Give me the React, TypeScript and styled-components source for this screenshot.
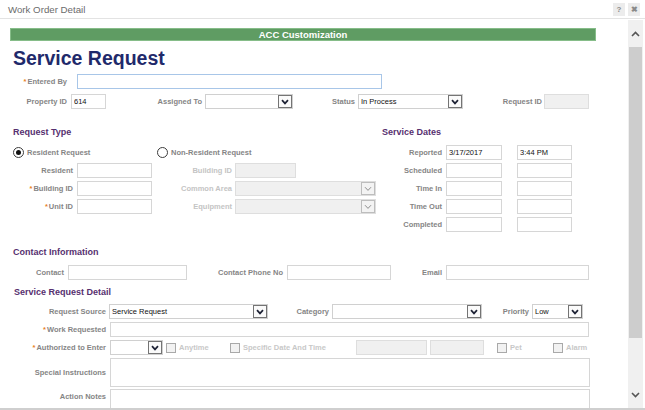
import styled, { createGlobalStyle } from "styled-components";

const GlobalStyle = createGlobalStyle`
  body {
    margin: 0;
    background: #fff;
    font-family: "Liberation Sans", Arial, sans-serif;
  }
`;

function Chevron({ disabled }: { disabled?: boolean }) {
  return (
    <svg width="8" height="6" viewBox="0 0 8 6">
      <path
        d="M1 1.2 L4 4.4 L7 1.2"
        fill="none"
        stroke={disabled ? "#8d8d8d" : "#1d2235"}
        strokeWidth={disabled ? 1 : 1.7}
      />
    </svg>
  );
}

function Req() {
  return <Star>*</Star>;
}

type SelectProps = { w: number; ml: number; value?: string; disabled?: boolean };

function Select({ w, ml, value, disabled }: SelectProps) {
  return (
    <SelectBox $w={w} $ml={ml} $disabled={disabled}>
      <span>{value}</span>
      <ArrowBtn $disabled={disabled}>
        <Chevron disabled={disabled} />
      </ArrowBtn>
    </SelectBox>
  );
}

function App() {
  return (
    <>
      <GlobalStyle />
      <Window>
        <TitleBar>
          <span>Work Order Detail</span>
          <TitleButtons>
            <TitleBtn>?</TitleBtn>
            <TitleBtn>✖</TitleBtn>
          </TitleButtons>
        </TitleBar>
        <Body>
          <Content>
            <Banner>ACC Customization</Banner>
            <PageTitle>Service Request</PageTitle>

            <Row $mt={5}>
              <Label $w={57}>
                <Req />
                Entered By
              </Label>
              <TextBox $w={305} $ml={10} $focus readOnly value="" />
            </Row>

            <Row $mt={5}>
              <Label $w={57}>Property ID</Label>
              <TextBox $w={35} $ml={4} readOnly value="614" />
              <Label $w={96}>Assigned To</Label>
              <Select w={88} ml={3} />
              <Label $w={62}>Status</Label>
              <Select w={105} ml={3} value="In Process" />
              <Label $w={79}>Request ID</Label>
              <TextBox $w={45} $ml={2} $disabled readOnly value="" />
            </Row>

            <Columns>
              <Column $w={372}>
                <Heading $pl={3}>Request Type</Heading>
                <Row $mt={7}>
                  <RadioOption $w={144} $ml={3}>
                    <Radio>
                      <Dot />
                    </Radio>
                    Resident Request
                  </RadioOption>
                  <RadioOption>
                    <Radio />
                    Non-Resident Request
                  </RadioOption>
                </Row>
                <Row $mt={3}>
                  <Label $w={63}>Resident</Label>
                  <TextBox $w={75} $ml={4} readOnly value="" />
                  <Label $w={80} $muted>
                    Building ID
                  </Label>
                  <TextBox $w={61} $ml={3} $disabled readOnly value="" />
                </Row>
                <Row $mt={3}>
                  <Label $w={63}>
                    <Req />
                    Building ID
                  </Label>
                  <TextBox $w={75} $ml={4} readOnly value="" />
                  <Label $w={80} $muted>
                    Common Area
                  </Label>
                  <Select w={141} ml={3} disabled />
                </Row>
                <Row $mt={3}>
                  <Label $w={63}>
                    <Req />
                    Unit ID
                  </Label>
                  <TextBox $w={75} $ml={4} readOnly value="" />
                  <Label $w={80} $muted>
                    Equipment
                  </Label>
                  <Select w={141} ml={3} disabled />
                </Row>
              </Column>

              <Column>
                <Heading>Service Dates</Heading>
                {[
                  ["Reported", "3/17/2017", "3:44 PM"],
                  ["Scheduled", "", ""],
                  ["Time In", "", ""],
                  ["Time Out", "", ""],
                  ["Completed", "", ""],
                ].map(([label, date, time], i) => (
                  <Row key={label} $mt={i === 0 ? 7 : 3}>
                    <Label $w={60}>{label}</Label>
                    <TextBox $w={56} $ml={4} readOnly value={date} />
                    <TextBox $w={55} $ml={15} readOnly value={time} />
                  </Row>
                ))}
              </Column>
            </Columns>

            <Heading $mt={14} $pl={3}>
              Contact Information
            </Heading>
            <Row $mt={7}>
              <Label $w={54}>Contact</Label>
              <TextBox $w={119} $ml={4} readOnly value="" />
              <Label $w={96}>Contact Phone No</Label>
              <TextBox $w={104} $ml={4} readOnly value="" />
              <Label $w={51}>Email</Label>
              <TextBox $w={143} $ml={4} readOnly value="" />
            </Row>

            <Heading $mt={6} $pl={4}>
              Service Request Detail
            </Heading>
            <Row $mt={6}>
              <Label $w={96}>Request Source</Label>
              <Select w={159} ml={3} value="Service Request" />
              <Label $w={61}>Category</Label>
              <Select w={150} ml={3} />
              <Label $w={47}>Priority</Label>
              <Select w={51} ml={3} value="Low" />
            </Row>
            <Row $mt={3}>
              <Label $w={96}>
                <Req />
                Work Requested
              </Label>
              <TextBox $w={479} $ml={4} readOnly value="" />
            </Row>
            <Row $mt={3}>
              <Label $w={96}>
                <Req />
                Authorized to Enter
              </Label>
              <Select w={53} ml={4} />
              <CheckOption $w={64} $ml={3}>
                <CheckBox />
                Anytime
              </CheckOption>
              <CheckOption $w={126}>
                <CheckBox />
                Specific Date And Time
              </CheckOption>
              <TextBox $w={71} $ml={0} $disabled readOnly value="" />
              <TextBox $w={54} $ml={3} $disabled readOnly value="" />
              <CheckOption $w={56} $ml={13}>
                <CheckBox />
                Pet
              </CheckOption>
              <CheckOption>
                <CheckBox />
                Alarm
              </CheckOption>
            </Row>
            <Row $mt={3} $h={29}>
              <Label $w={96}>Special Instructions</Label>
              <NoteBox $w={480} $h={29} />
            </Row>
            <Row $mt={2} $h={29} $top>
              <Label $w={96} $pt={3}>
                Action Notes
              </Label>
              <NoteBox $w={480} $h={29} />
            </Row>
          </Content>

          <ScrollBar>
            <ScrollBtn>
              <svg width="9" height="6" viewBox="0 0 9 6">
                <path d="M1 5 L4.5 1.5 L8 5" fill="none" stroke="#555" strokeWidth="1.6" />
              </svg>
            </ScrollBtn>
            <Thumb />
            <ScrollSpacer />
            <ScrollBtn>
              <svg width="9" height="6" viewBox="0 0 9 6">
                <path d="M1 1 L4.5 4.5 L8 1" fill="none" stroke="#555" strokeWidth="1.6" />
              </svg>
            </ScrollBtn>
          </ScrollBar>
        </Body>
      </Window>
    </>
  );
}

export default App;

const Window = styled.div`
  width: 645px;
  height: 410px;
  box-sizing: border-box;
  display: flex;
  flex-direction: column;
  overflow: hidden;
  background: #fff;
  border-bottom: 2px solid #cfcfcf;
`;

const TitleBar = styled.div`
  height: 18px;
  flex-shrink: 0;
  display: flex;
  align-items: center;
  justify-content: space-between;
  padding: 0 5px 0 8px;
  border-bottom: 1px solid #e3e3e3;
  font-size: 9.7px;
  color: #6b6b6b;
`;

const TitleButtons = styled.div`
  display: flex;
  gap: 3px;
`;

const TitleBtn = styled.span`
  width: 12px;
  height: 13px;
  display: flex;
  align-items: center;
  justify-content: center;
  background: #ececec;
  color: #8a8a8a;
  font-size: 8px;
  font-weight: bold;
`;

const Body = styled.div`
  flex: 1;
  min-height: 0;
  display: flex;
`;

const Content = styled.div`
  flex: 1;
  min-width: 0;
  overflow: hidden;
  padding: 9px 0 0 10px;
`;

const Banner = styled.div`
  width: 586px;
  height: 13px;
  box-sizing: border-box;
  border: 1px solid #86bd89;
  background: #5f9c63;
  color: #fff;
  font-size: 9.5px;
  font-weight: bold;
  text-align: center;
  line-height: 11px;
`;

const PageTitle = styled.h1`
  margin: 6px 0 0 3px;
  height: 22px;
  line-height: 22px;
  font-size: 19.5px;
  font-weight: bold;
  color: #1f2a6b;
`;

const Row = styled.div<{ $mt?: number; $h?: number; $top?: boolean }>`
  display: flex;
  align-items: ${({ $top }) => ($top ? "flex-start" : "center")};
  height: ${({ $h }) => $h ?? 15}px;
  margin-top: ${({ $mt }) => $mt ?? 0}px;
`;

const Label = styled.span<{ $w: number; $muted?: boolean; $pt?: number }>`
  width: ${({ $w }) => $w}px;
  flex-shrink: 0;
  text-align: right;
  white-space: nowrap;
  font-size: 7.5px;
  font-weight: bold;
  padding-top: ${({ $pt }) => $pt ?? 0}px;
  color: ${({ $muted }) => ($muted ? "#c4c4c4" : "#858585")};
`;

const Star = styled.span`
  color: #e8801f;
  margin-right: 1px;
`;

const TextBox = styled.input<{ $w: number; $ml: number; $disabled?: boolean; $focus?: boolean }>`
  width: ${({ $w }) => $w}px;
  margin: 0 0 0 ${({ $ml }) => $ml}px;
  height: 15px;
  flex-shrink: 0;
  box-sizing: border-box;
  padding: 0 2px;
  outline: none;
  font-family: inherit;
  font-size: 7.5px;
  color: #111;
  border: 1px solid
    ${({ $disabled, $focus }) => ($focus ? "#a8c6e8" : $disabled ? "#dedede" : "#d6d6d6")};
  background: ${({ $disabled }) => ($disabled ? "#f0f0f0" : "#fff")};
`;

const NoteBox = styled.div<{ $w: number; $h: number }>`
  width: ${({ $w }) => $w}px;
  height: ${({ $h }) => $h}px;
  margin-left: 4px;
  flex-shrink: 0;
  box-sizing: border-box;
  border: 1px solid #d6d6d6;
  background: #fff;
`;

const SelectBox = styled.div<{ $w: number; $ml: number; $disabled?: boolean }>`
  width: ${({ $w }) => $w}px;
  margin-left: ${({ $ml }) => $ml}px;
  height: 15px;
  flex-shrink: 0;
  box-sizing: border-box;
  display: flex;
  align-items: center;
  justify-content: space-between;
  padding-left: 2px;
  font-size: 7.5px;
  color: #111;
  border: 1px solid ${({ $disabled }) => ($disabled ? "#dedede" : "#d0d0d0")};
  background: ${({ $disabled }) => ($disabled ? "#f0f0f0" : "#fff")};
`;

const ArrowBtn = styled.span<{ $disabled?: boolean }>`
  width: 14px;
  height: 13px;
  box-sizing: border-box;
  display: flex;
  align-items: center;
  justify-content: center;
  border: 1px solid ${({ $disabled }) => ($disabled ? "#bdbdbd" : "#747474")};
  background: ${({ $disabled }) => ($disabled ? "#f3f3f3" : "#fafafa")};
`;

const Columns = styled.div`
  display: flex;
  margin-top: 17px;
`;

const Column = styled.div<{ $w?: number }>`
  width: ${({ $w }) => ($w ? `${$w}px` : "auto")};
  flex-shrink: 0;
`;

const Heading = styled.div<{ $mt?: number; $pl?: number }>`
  height: 12px;
  line-height: 12px;
  margin-top: ${({ $mt }) => $mt ?? 0}px;
  padding-left: ${({ $pl }) => $pl ?? 0}px;
  font-size: 9px;
  font-weight: bold;
  color: #56306f;
`;

const RadioOption = styled.span<{ $w?: number; $ml?: number }>`
  display: flex;
  align-items: center;
  gap: 3px;
  width: ${({ $w }) => ($w ? `${$w}px` : "auto")};
  margin-left: ${({ $ml }) => $ml ?? 0}px;
  flex-shrink: 0;
  font-size: 7.5px;
  font-weight: bold;
  color: #858585;
`;

const Radio = styled.span`
  width: 11px;
  height: 11px;
  box-sizing: border-box;
  border-radius: 50%;
  border: 1px solid #3c3c3c;
  background: #fff;
  display: flex;
  align-items: center;
  justify-content: center;
`;

const Dot = styled.span`
  width: 5px;
  height: 5px;
  border-radius: 50%;
  background: #111;
`;

const CheckOption = styled.span<{ $w?: number; $ml?: number }>`
  display: flex;
  align-items: center;
  gap: 3px;
  width: ${({ $w }) => ($w ? `${$w}px` : "auto")};
  margin-left: ${({ $ml }) => $ml ?? 0}px;
  flex-shrink: 0;
  white-space: nowrap;
  font-size: 7.5px;
  font-weight: bold;
  color: #c8c8c8;
`;

const CheckBox = styled.span`
  width: 10px;
  height: 10px;
  box-sizing: border-box;
  border: 1px solid #a9a9a9;
  background: #f2f2f2;
  flex-shrink: 0;
`;

const ScrollBar = styled.div`
  width: 15px;
  margin: 1px 2px 0 0;
  flex-shrink: 0;
  display: flex;
  flex-direction: column;
  background: #f0f0f0;
`;

const ScrollBtn = styled.div`
  height: 27px;
  display: flex;
  align-items: center;
  justify-content: center;
`;

const Thumb = styled.div`
  height: 291px;
  margin: 0 1px;
  background: #cdcdcd;
`;

const ScrollSpacer = styled.div`
  flex: 1;
`;
